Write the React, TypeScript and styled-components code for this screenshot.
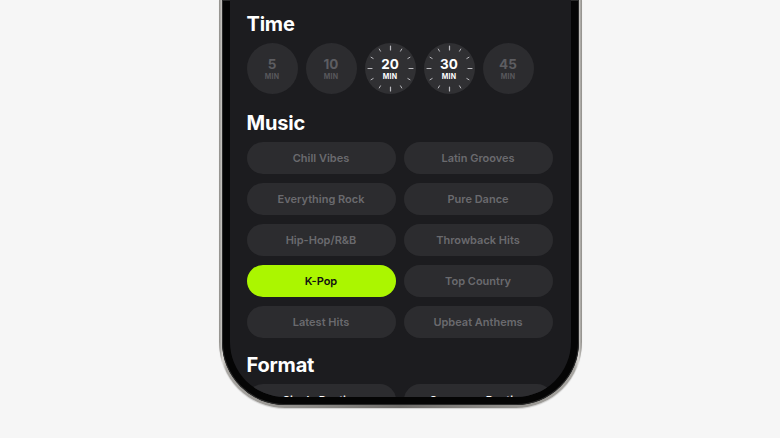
import React, {useState} from 'react';
import styled, {createGlobalStyle} from 'styled-components';

const GlobalStyle = createGlobalStyle`
  html, body {
    margin: 0;
    padding: 0;
    background: #f6f6f6;
    font-family: Inter, "Noto Sans", "Liberation Sans", sans-serif;
    -webkit-font-smoothing: antialiased;
  }
`;

const TIMES = [5, 10, 20, 30, 45];

const MUSIC = [
  'Chill Vibes',
  'Latin Grooves',
  'Everything Rock',
  'Pure Dance',
  'Hip-Hop/R&B',
  'Throwback Hits',
  'K-Pop',
  'Top Country',
  'Latest Hits',
  'Upbeat Anthems',
];

const FORMATS = ['Single Routine', 'Sequence Routine'];

// twelve marks around the dial, the quarter ones a bit longer
const DialTicks: React.FC = () => (
  <TickSvg viewBox="0 0 51 51" aria-hidden>
    {Array.from({length: 12}).map((_, i) => {
      const major = i % 3 === 0;
      const a = (i * Math.PI) / 6;
      const r1 = major ? 18.5 : 20;
      const r2 = 22.5;
      const x1 = 25.5 + Math.sin(a) * r1;
      const y1 = 25.5 - Math.cos(a) * r1;
      const x2 = 25.5 + Math.sin(a) * r2;
      const y2 = 25.5 - Math.cos(a) * r2;
      return (
        <line
          key={i}
          x1={x1}
          y1={y1}
          x2={x2}
          y2={y2}
          stroke="#b9b9be"
          strokeWidth={major ? 1.2 : 1}
          strokeLinecap="round"
        />
      );
    })}
  </TickSvg>
);

const App: React.FC = () => {
  const [times, setTimes] = useState<number[]>([20, 30]);
  const [music, setMusic] = useState('K-Pop');

  const toggleTime = (t: number) =>
    setTimes((prev) => (prev.includes(t) ? prev.filter((x) => x !== t) : [...prev, t]));

  return (
    <>
      <GlobalStyle />
      <Stage>
        <Titanium>
          <Bezel>
            <Screen>
              <Heading>Time</Heading>
              <TimeRow>
                {TIMES.map((t) => {
                  const on = times.includes(t);
                  return (
                    <TimeDial key={t} $active={on} onClick={() => toggleTime(t)}>
                      {on && <DialTicks />}
                      <DialValue $active={on}>{t}</DialValue>
                      <DialUnit $active={on}>MIN</DialUnit>
                    </TimeDial>
                  );
                })}
              </TimeRow>

              <Heading>Music</Heading>
              <PillGrid>
                {MUSIC.map((m) => (
                  <Pill key={m} $active={music === m} onClick={() => setMusic(m)}>
                    {m}
                  </Pill>
                ))}
              </PillGrid>

              <Heading>Format</Heading>
              <PillGrid>
                {FORMATS.map((f) => (
                  <Pill key={f} $bright>
                    {f}
                  </Pill>
                ))}
              </PillGrid>
            </Screen>
          </Bezel>
        </Titanium>
      </Stage>
    </>
  );
};

const Stage = styled.div`
  display: flex;
  justify-content: center;
  padding-left: 20px;
  height: 438px;
  overflow: hidden;
`;

const Titanium = styled.div`
  width: 363px;
  height: 408px;
  box-sizing: border-box;
  padding: 0 3px 3px;
  border-radius: 0 0 66px 66px;
  background: linear-gradient(90deg, #8d8b87 0%, #d9d7d3 1%, #a8a6a2 2%, #6f6d6a 50%, #a8a6a2 98%, #d9d7d3 99%, #8d8b87 100%);
  box-shadow: 0 1px 1px rgba(0, 0, 0, 0.15);
`;

const Bezel = styled.div`
  height: 100%;
  box-sizing: border-box;
  padding: 0 8px 8px;
  border-radius: 0 0 63px 63px;
  background: #050505;
  box-shadow: inset 0 0 0 1px #2a2a2a;
`;

const Screen = styled.div`
  height: 100%;
  box-sizing: border-box;
  padding: 12px 18px 0 17px;
  border-radius: 0 0 55px 55px;
  background: #1c1c1f;
  overflow: hidden;
`;

const Heading = styled.h2`
  margin: 0 0 7px;
  font-size: 20px;
  line-height: 24px;
  font-weight: 700;
  color: #ffffff;
  letter-spacing: -0.2px;
`;

const TimeRow = styled.div`
  display: flex;
  gap: 8px;
  margin-bottom: 17px;
`;

const TimeDial = styled.div<{$active?: boolean}>`
  position: relative;
  width: 51px;
  height: 51px;
  border-radius: 50%;
  background: ${({$active}) => ($active ? '#303033' : '#2c2c2f')};
  display: flex;
  flex-direction: column;
  align-items: center;
  justify-content: center;
  cursor: pointer;
`;

const TickSvg = styled.svg`
  position: absolute;
  inset: 0;
  width: 51px;
  height: 51px;
`;

const DialValue = styled.span<{$active?: boolean}>`
  font-size: 13.5px;
  line-height: 14px;
  font-weight: 700;
  color: ${({$active}) => ($active ? '#ffffff' : '#5d5d61')};
`;

const DialUnit = styled.span<{$active?: boolean}>`
  font-size: 7px;
  line-height: 8px;
  font-weight: 700;
  letter-spacing: 0.2px;
  color: ${({$active}) => ($active ? '#ffffff' : '#58585c')};
  margin-top: 2px;
`;

const PillGrid = styled.div`
  display: grid;
  grid-template-columns: 1fr 1fr;
  column-gap: 8px;
  row-gap: 9px;
  margin-bottom: 15px;
`;

const Pill = styled.div<{$active?: boolean; $bright?: boolean}>`
  height: 32px;
  border-radius: 16px;
  display: flex;
  align-items: center;
  justify-content: center;
  font-size: 11px;
  font-weight: 600;
  background: ${({$active}) => ($active ? '#abf600' : '#2c2c2f')};
  color: ${({$active, $bright}) => ($active ? '#111111' : $bright ? '#ffffff' : '#6a6a6e')};
  cursor: pointer;
`;

export default App;
